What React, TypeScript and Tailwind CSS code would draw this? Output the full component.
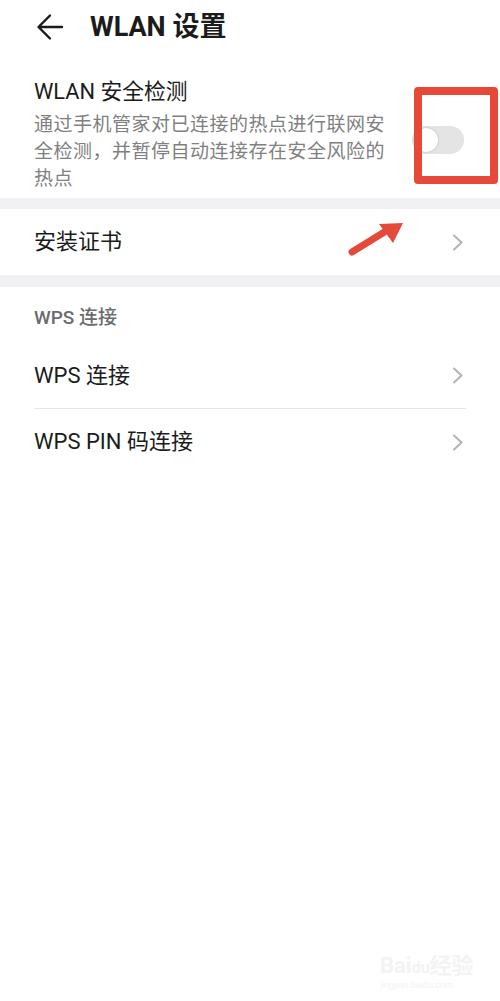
import React from "react";

const font = { fontFamily: 'Roboto, "Noto Sans CJK SC", sans-serif' };

function Chevron() {
  return (
    <svg width="12" height="17" viewBox="0 0 12 17" fill="none">
      <path d="M2 1.5L9.5 8.5L2 15.5" stroke="#b3b3b3" strokeWidth="2" strokeLinecap="round" strokeLinejoin="round" />
    </svg>
  );
}

function Row({ label, last }: { label: string; last?: boolean }) {
  return (
    <div className="px-[34px]">
      <div
        className={
          "h-[66px] flex items-center justify-between pr-[2px] " +
          (last ? "" : "border-b border-[#e6e6e6]")
        }
      >
        <span className="text-[22px] text-[#1b1b1b] leading-[28px]">{label}</span>
        <Chevron />
      </div>
    </div>
  );
}

export default function App() {
  return (
    <div className="relative w-full min-h-[1001px] bg-white" style={font}>
      {/* header */}
      <header className="h-[54px] flex items-center pl-[36px]">
        <svg width="28" height="28" viewBox="0 0 28 28" fill="none">
          <path d="M26 14H3M14 2.5L2.5 14L14 25.5" stroke="#1b1b1b" strokeWidth="2.4" strokeLinecap="round" strokeLinejoin="round" />
        </svg>
        <h1 className="ml-[26px] text-[27px] font-bold text-[#1b1b1b] leading-[32px]">WLAN 设置</h1>
      </header>

      {/* security check */}
      <section className="flex items-center justify-between pl-[34px] pr-[36px] pt-[24px] pb-[6px]">
        <div className="w-[362px]">
          <div className="text-[21.8px] text-[#1b1b1b] leading-[28px]">WLAN 安全检测</div>
          <p className="mt-[5px] text-[19px] tracking-[0.5px] leading-[27px] text-[#808080]">
            通过手机管家对已连接的热点进行联网安全检测，并暂停自动连接存在安全风险的热点
          </p>
        </div>
        <div className="mt-[10px] w-[52px] h-[28px] rounded-full bg-[#e4e4e4] flex items-center px-[2px] shrink-0">
          <div className="w-[24px] h-[24px] rounded-full bg-white shadow-[0_0_2px_rgba(0,0,0,0.25)]" />
        </div>
      </section>

      <div className="h-[11px] bg-[#f1f1f3]" />

      <div className="h-[66px] flex items-center justify-between pl-[34px] pr-[36px]">
        <span className="text-[22px] text-[#1b1b1b] leading-[28px]">安装证书</span>
        <Chevron />
      </div>

      <div className="h-[12px] bg-[#f1f1f3]" />

      <div className="h-[56px] pt-[18px] pl-[34px] text-[19px] font-medium leading-[26px] text-[#6b6b6b]">WPS 连接</div>

      <Row label="WPS 连接" />
      <Row label="WPS PIN 码连接" last />

      {/* annotation: red box */}
      <div className="absolute left-[414px] top-[87px] w-[84px] h-[97px] border-[8px] border-[#e6493a] rounded-[4px]" />

      {/* annotation: red arrow */}
      <svg className="absolute left-[346px] top-[218px]" width="62" height="40" viewBox="0 0 62 40">
        <path d="M6 34L40 13" stroke="#e6493a" strokeWidth="7" strokeLinecap="round" />
        <path d="M57 5L33 6L47 25Z" fill="#e6493a" />
      </svg>

      {/* watermark */}
      <div className="absolute left-[380px] top-[955px] text-[#f3f3f3] leading-none">
        <div className="text-[22px] font-bold">Bai<span className="text-[16px]">du</span>经验</div>
        <div className="text-[9px] mt-[4px]">jingyan.baidu.com</div>
      </div>
    </div>
  );
}
